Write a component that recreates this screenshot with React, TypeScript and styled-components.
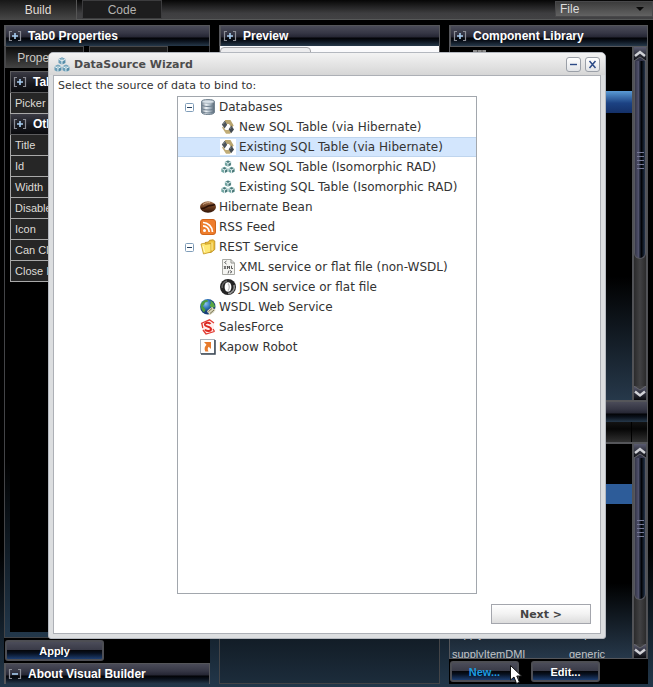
import React, { useState } from "react";
import styled, { createGlobalStyle, css } from "styled-components";

const ui = '"Liberation Sans", Arial, sans-serif';
const dialogFont = '"DejaVu Sans", Verdana, sans-serif';

const GlobalStyle = createGlobalStyle`
  * { box-sizing: border-box; }
  body { margin: 0; background: #000; font-family: ${ui}; font-size: 11px; color: #ddd; }
  button, select { font: inherit; color: inherit; margin: 0; padding: 0; }
  svg { display: block; flex: none; }
`;

const Page = styled.div`
  display: flex;
  flex-direction: column;
  height: 100vh;
  overflow: hidden;
  background: linear-gradient(#000 0, #000 80%, #22374a 100%);
`;

/* ---------- top bar ---------- */
const TopBar = styled.header`
  display: flex;
  flex: none;
  height: 20px;
  background: linear-gradient(#060606, #3e3e40 70%, #424244);
  border-bottom: 1px solid #565858;
`;
const TabStrip = styled.nav`
  display: flex;
  flex: 1;
  gap: 5px;
`;
const PageTab = styled.button<{ $active?: boolean }>`
  width: ${(p) => (p.$active ? 77 : 80)}px;
  height: ${(p) => (p.$active ? 20 : 19)}px;
  border: 1px solid ${(p) => (p.$active ? "#555" : "#3c3c3e")};
  border-width: ${(p) => (p.$active ? "0 1px 0 0" : "1px")};
  background: ${(p) => (p.$active ? "linear-gradient(#171717, #484848)" : "#1d1d1e")};
  color: ${(p) => (p.$active ? "#e0dcd6" : "#b4b2ae")};
  font-size: 12px;
  line-height: 18px;
`;
const FileMenu = styled.div`
  display: grid;
  align-items: center;
  width: 98px;
  height: 16px;
  margin-top: 1px;
  > * { grid-area: 1 / 1; }
  > svg { justify-self: end; margin-right: 9px; pointer-events: none; }
`;
const FileSelect = styled.select`
  appearance: none;
  height: 16px;
  padding-left: 4px;
  border: 1px solid #48484a;
  border-radius: 0;
  background: linear-gradient(#3c3c3c, #626262);
  font-size: 12px;
  line-height: 12px;
`;

/* ---------- columns and panels ---------- */
const Columns = styled.main`
  display: grid;
  grid-template-columns: 206fr 221fr 199fr;
  gap: 9px;
  flex: 1;
  min-height: 0;
  padding: 5px 5px 3px 4px;
`;
const Column = styled.section`
  display: flex;
  flex-direction: column;
  min-width: 0;
  min-height: 0;
`;
const Bar = styled.div`
  display: flex;
  align-items: center;
  flex: none;
  gap: 6px;
  height: 21px;
  padding-left: 2px;
  border: 1px solid #55565a;
  border-width: 1px 1px 0 2px;
  background: linear-gradient(#4a4b58 0, #363745 35%, #252633 55%, #020306 60%, #0a111b 75%, #26384a 100%);
`;
const BarTitle = styled.h2`
  margin: 0;
  color: #fff;
  font-size: 12px;
  font-weight: bold;
  white-space: nowrap;
`;
const PropertyPanel = styled.div`
  display: flex;
  flex-direction: column;
  flex: 1;
  min-height: 0;
  padding: 0 5px 5px;
  border: 1px solid #434447;
  border-top: 0;
  background: linear-gradient(#000 70%, #22374a);
`;
const PropertyTabs = styled.div`
  display: flex;
  gap: 5px;
  height: 25px;
  margin-left: -5px;
`;
const PropertyTab = styled.button<{ $active?: boolean }>`
  width: 79px;
  height: 22px;
  border: 1px solid #48484a;
  border-bottom: 0;
  background: ${(p) => (p.$active ? "linear-gradient(#0c0c0c, #444)" : "#1c1c1c")};
  color: #c9c7c2;
  font-size: 12px;
  line-height: 18px;
`;
const PropertyBody = styled.div`
  flex: 1;
  min-height: 0;
  background: #000;
`;
const PropertyTable = styled.table`
  width: 100%;
  border-collapse: collapse;
  th, td {
    height: 21px;
    padding: 0 4px;
    border: 1px solid #a9a9a9;
    background: #262626;
    color: #dedbd6;
    font-weight: normal;
    text-align: left;
    white-space: nowrap;
  }
  th { width: 100px; }
  .section { padding: 0; height: 21px; border-color: #5c5c5e; }
`;
const SectionBar = styled(Bar)`
  height: 20px;
  border: 0;
  background: linear-gradient(#3b3b45, #16171d 60%, #0a0b0e);
`;
const ActionStrip = styled.div`
  display: flex;
  flex: none;
  gap: 12px;
  padding: 2px 1px;
  background: #000;
`;
const ActionButton = styled.button<{ $wide?: boolean; $hot?: boolean }>`
  width: ${(p) => (p.$wide ? 99 : 69)}px;
  height: 21px;
  border: 2px solid #4d4e54;
  border-radius: 3px;
  background: linear-gradient(#4b4c59 0, #3a3b48 45%, #04060b 50%, #07101f 65%, #1c3d70 100%);
  color: ${(p) => (p.$hot ? "#1d9ce0" : "#fff")};
  font-size: 11px;
  font-weight: bold;
  line-height: 16px;
`;
const NewSlot = styled.div`
  position: relative;
  > svg { position: absolute; left: 60px; top: 4px; z-index: 5; }
`;

/* ---------- preview ---------- */
const PreviewPane = styled.div`
  flex: 1;
  border: 1px solid #434447;
  border-top: 0;
  background: linear-gradient(#fafafc 20px, #000 20px, #000 80%, #1c2c3b);
`;
const PreviewTab = styled.div`
  width: 91px;
  height: 20px;
  border: 1px solid #a4a4a8;
  border-radius: 4px 4px 0 0;
  background: #ececee;
  margin-top: 1px;
`;

/* ---------- library lists ---------- */
const ListArea = styled.div<{ $grow: number }>`
  display: flex;
  flex: ${(p) => p.$grow} 1 0;
  min-height: 0;
  border: 1px solid #55565a;
  border-width: 1px 0 1px 1px;
`;
const ListBody = styled.div`
  flex: 1;
  min-width: 0;
  overflow: hidden;
  background: linear-gradient(#000 65%, #26384a);
`;
const LibraryRow = styled.div<{ $selected?: boolean }>`
  height: 22px;
  padding: 3px 23px;
  ${(p) => p.$selected && css`background: linear-gradient(#5b9bd5, #1c4283 55%, #143068);`}
`;
const GridHead = styled.div`
  display: flex;
  flex: none;
  height: 21px;
  gap: 1px;
  border-bottom: 1px solid #55565a;
  background: #000;
  &::before, &::after {
    content: "";
    flex: 1;
    background: linear-gradient(#131313, #060606 35%, #303030);
  }
  &::after { flex: 0 0 15px; border-right: 1px solid #444; }
`;
const SourceTable = styled.table`
  width: 100%;
  border-collapse: collapse;
  table-layout: fixed;
  td { height: 20px; padding: 0 2px; color: #c2c4c6; line-height: 16px; white-space: nowrap; }
  td:first-child { width: 117px; }
  tr.selected td { background: #2d5c99; }
`;
const Track = styled.div`
  display: flex;
  flex-direction: column;
  flex: none;
  width: 16px;
  border: 1px solid #515256;
  border-width: 0 2px;
  background: linear-gradient(90deg, #2b2b2c, #414143 50%, #2b2b2c);
`;
const Thumb = styled.div<{ $grow: number }>`
  display: flex;
  align-items: center;
  justify-content: center;
  flex: ${(p) => p.$grow} 1 0;
  border: 1px solid #56575f;
  border-top: 0;
  border-radius: 0 0 6px 6px;
  background: linear-gradient(90deg, #343548 0, #50516c 35%, #1b2130 50%, #020306 65%, #23334a 100%);
`;
const Rest = styled.div<{ $grow: number }>`
  flex: ${(p) => p.$grow} 1 0;
`;

/* ---------- dialog ---------- */
const Overlay = styled.div`
  position: fixed;
  inset: 0;
  display: flex;
  padding: 52px 47px 48px 48px;
  pointer-events: none;
`;
const Dialog = styled.section`
  display: flex;
  flex-direction: column;
  flex: 1;
  padding: 0 4px 4px;
  border: 1px solid #b4b8bf;
  border-radius: 5px 5px 3px 3px;
  background: #dcdee0;
  color: #333;
  font-family: ${dialogFont};
  pointer-events: auto;
`;
const DialogHead = styled.header`
  display: flex;
  align-items: center;
  flex: none;
  gap: 4px;
  height: 22px;
  margin: 0 -4px;
  padding: 1px 5px 0;
  border-radius: 4px 4px 0 0;
  background: linear-gradient(#f3f3f3, #d6d6d6);
`;
const DialogTitle = styled.h1`
  flex: 1;
  margin: 0;
  color: #4c4c4c;
  font-size: 11px;
`;
const HeadButton = styled.button`
  display: grid;
  place-items: center;
  width: 15px;
  height: 15px;
  border: 1px solid #9ba0a8;
  border-radius: 3px;
  background: linear-gradient(#fff, #e2e4e7);
`;
const DialogBody = styled.div`
  display: flex;
  flex-direction: column;
  flex: 1;
  min-height: 0;
  padding: 0 4px 9px;
  border: 1px solid #adb0b6;
  background: #fff;
`;
const Prompt = styled.p`
  flex: none;
  margin: 0;
  font-size: 11px;
  line-height: 20px;
`;
const Tree = styled.ul`
  flex: 1;
  width: 300px;
  min-height: 0;
  margin: 0 auto 10px;
  padding: 0;
  overflow: hidden;
  list-style: none;
  border: 1px solid #a2a7ad;
`;
const TreeRow = styled.li<{ $depth: number; $selected?: boolean }>`
  display: flex;
  align-items: center;
  gap: 3px;
  height: 20px;
  padding-left: ${(p) => (p.$depth ? 42 : 7)}px;
  border: 1px solid transparent;
  border-width: 1px 0;
  font-size: 12px;
  white-space: nowrap;
  cursor: default;
  ${(p) => p.$selected && css`background: #d3e6fd; border-color: #bfd5ee;`}
`;
const Expander = styled.button`
  width: 9px;
  height: 9px;
  margin-right: 3px;
  border: 0;
  background: none;
`;
const ExpanderGap = styled.span`
  width: 9px;
  margin-right: 3px;
`;
const NextButton = styled.button`
  align-self: flex-end;
  flex: none;
  width: 100px;
  height: 20px;
  margin-right: 5px;
  border: 1px solid #a4a6ad;
  background: linear-gradient(#fff, #f2f2f2 50%, #dcdcdc);
  color: #444;
  font-size: 11px;
  font-weight: bold;
`;

/* ---------- drawings ---------- */
const Bracket = ({ minus }: { minus?: boolean }) => (
  <svg width="14" height="13" viewBox="0 0 14 13" fill="none">
    <path d="M4 1.500H1.500V10.500H4M10 1.500h2.500v9H10" stroke="#8b8d96" strokeWidth="1.200" />
    <path d={minus ? "M4 6h6" : "M4 6h6M7 3v6"} stroke="#a8cdf0" strokeWidth="1.600" />
  </svg>
);

const Cluster = ({ small }: { small?: boolean }) => (
  <svg width="16" height="16" viewBox={small ? "-1 -1 18 18" : "0 0 16 16"}>
    {[[8, 4], [4, 11.3], [12, 11.3]].map(([x, y]) => (
      <g key={x} transform={`translate(${x} ${y})`}>
        <path d="M0-3.7L3.5-2V2L0 3.8L-3.5 2V-2Z" fill={small ? "#6fa3a0" : "#6b9db7"} />
        <path d="M-3.5-1.8L0-.1L3.5-1.8M0 0V3.8" stroke="#eef5f6" strokeWidth="1" fill="none" />
        <path d="M0-2.8L2-1.8L0-.9L-2-1.8Z" fill={small ? "#4b7476" : "#a5c7d2"} />
        <path d="M.6.8L3-.5V1.8L.6 3Z" fill={small ? "#3c6264" : "#4c86a0"} opacity=".75" />
      </g>
    ))}
  </svg>
);

const Hibernate = () => (
  <svg width="16" height="16" viewBox="0 0 16 16">
    <rect width="16" height="16" fill="#fff" />
    <path d="M5 1h5.5l3.2 5.5-2 2.4L9 5H6.8L5 3.4Z" fill="#b9a56f" />
    <path d="M3 7.5L5.6 11H9l2.2 1.5-1 2.2H6L2 8.6Z" fill="#c1ad78" />
    <path d="M4.7 1.8L7.2 5.8L4.6 9.5L1.8 5.5Z" fill="#4d5358" />
    <path d="M11.4 6.4L14 10.5L11.2 14.3L8.6 10.2Z" fill="#454b51" />
    <path d="M4.7 3L3 5.5M11.3 7.7L10 10" stroke="#7e858b" />
  </svg>
);

const Database = () => (
  <svg width="16" height="16" viewBox="0 0 16 16">
    <defs>
      <linearGradient id="steel">
        <stop offset="0" stopColor="#6e7c89" /><stop offset=".35" stopColor="#f1f5f8" />
        <stop offset=".65" stopColor="#a9b8c4" /><stop offset="1" stopColor="#536270" />
      </linearGradient>
    </defs>
    <path d="M1.500 2.500C1.500-.2 14.500-.2 14.500 2.500V13C14.500 16.500 1.500 16.500 1.500 13Z" fill="url(#steel)" stroke="#758592" />
    <path d="M1.500 5.800C3 8 13 8 14.500 5.800M1.500 9.300C3 11.500 13 11.500 14.500 9.300M1.500 12.300C3 14.500 13 14.500 14.500 12.300" fill="none" stroke="#6d7e8d" />
    <ellipse cx="8" cy="2.700" rx="6" ry="1.700" fill="#d8e1e8" stroke="#8e9ca8" strokeWidth=".6" />
  </svg>
);

const Bean = () => (
  <svg width="16" height="16" viewBox="0 0 16 16">
    <defs>
      <linearGradient id="bean" x2="0" y2="1"><stop stopColor="#a27450" /><stop offset=".5" stopColor="#6a3b1d" /><stop offset="1" stopColor="#2d1408" /></linearGradient>
    </defs>
    <ellipse cx="8" cy="8" rx="8" ry="5.800" fill="url(#bean)" />
    <path d="M1 9.500C5 10 6 7.500 9 6.800C11.500 6.200 13 6.500 15 5.500" fill="none" stroke="#2a1005" strokeWidth="1.600" />
    <path d="M3 5.500C5 3.700 8 3.300 10 3.700" stroke="#d2ab88" fill="none" />
  </svg>
);

const Rss = () => (
  <svg width="16" height="16" viewBox="0 0 16 16">
    <rect x=".5" y=".5" width="15" height="15" rx="2.500" fill="#ee7d2c" stroke="#d0651c" />
    <circle cx="4.500" cy="11.500" r="1.500" fill="#fff" />
    <path d="M3 6.800A6.200 6.200 0 0 1 9.200 13M3 3.500A9.500 9.500 0 0 1 12.500 13" fill="none" stroke="#fff" strokeWidth="1.700" />
  </svg>
);

const Folder = () => (
  <svg width="16" height="16" viewBox="0 0 16 16">
    <path d="M5 3.500L8.500 3L9.500 1.300L13 .8L14.800 2V10.500L11 13.500L5 13Z" fill="#eec23b" stroke="#b58718" strokeWidth=".8" />
    <path d="M1 5L4 4.300L5.500 5.300L11 4.500V13L3.500 15Z" fill="#ffe873" stroke="#c49620" strokeWidth=".8" />
    <path d="M12 3.500V11.500" stroke="#fff3a8" />
    <path d="M3 7L4.500 13" stroke="#fffad0" />
  </svg>
);

const XmlFile = () => (
  <svg width="16" height="16" viewBox="0 0 16 16" fill="none">
    <path d="M2.500.5H11L14.500 4V15.500H2.500Z" fill="#f5f5f2" stroke="#a9aaa5" />
    <path d="M11 .5V4h3.500" stroke="#8f908c" />
    <path d="M6.500 2L4.500 3.500L6.500 5M10 11.500l2 1.300-2 1.300M9 11.500l-1 3" stroke="#666" />
    <path d="M4 7l2 3M6 7l-2 3M7.500 10V7l1 1.500L9.500 7v3M11.500 6.800V9.500H13" stroke="#4b4b4b" strokeWidth=".9" />
  </svg>
);

const Json = () => (
  <svg width="16" height="16" viewBox="0 0 16 16" fill="none">
    <circle cx="8" cy="8" r="8" fill="#242424" />
    <path d="M8 14.500A6.500 6.500 0 0 0 14 6" stroke="#8f8f8f" strokeWidth="1.600" />
    <path d="M2.200 9A6 6 0 0 1 7 2" stroke="#666" strokeWidth="1.300" />
    <ellipse cx="8" cy="8" rx="3.400" ry="4.800" fill="#fff" />
    <path d="M8 4.500C9.500 6.500 9.500 9.500 8 11.500" stroke="#bcbcbc" strokeWidth="1.300" />
  </svg>
);

const Globe = () => (
  <svg width="16" height="16" viewBox="0 0 16 16">
    <defs><radialGradient id="sea" cx=".35" cy=".3"><stop stopColor="#8fc4f2" /><stop offset=".6" stopColor="#2f74b8" /><stop offset="1" stopColor="#173f78" /></radialGradient></defs>
    <circle cx="7.800" cy="7.800" r="7.700" fill="url(#sea)" />
    <path d="M1 5C2 2 5 .5 7.500 1L8 2.500L5 3.500L4 6L2.500 7L4.500 9L5.500 11L4 13.500C1.500 11.500.5 8 1 5Z" fill="#4c9c3f" />
    <path d="M10 1.500C13.500 3 15 5.500 15 8L12 9L9.500 6.500L11 4Z" fill="#5aa744" />
    <path d="M8.500 12.500l3.500-3M10 14.500l4-3.500" stroke="#ddd9bb" strokeWidth="2.600" strokeLinecap="round" />
    <path d="M8.500 12.500l3.500-3M10 14.500l4-3.500" stroke="#77725a" strokeWidth="1" />
  </svg>
);

const Salesforce = () => (
  <svg width="16" height="16" viewBox="0 0 16 16" fill="none">
    <path d="M1.500 4L10 1L14.500 4.500L13 13L6 15L2 11Z" fill="#fff0ee" />
    <path d="M10.500 5C9 2.800 4.500 3.700 5 6C5.500 8 11 7.300 11 10C11 12.500 6.500 12.800 5 10.500" stroke="#dc2720" strokeWidth="2" />
    <path d="M1 4.500L9.500.8L14 4M1.800 4.500L2.800 9M3 11L6 15L14.500 12.500M13 10l1.500 2.500" stroke="#e23b33" strokeWidth="1.300" />
  </svg>
);

const Kapow = () => (
  <svg width="16" height="16" viewBox="0 0 16 16">
    <rect x=".5" y=".5" width="14" height="14" fill="#fff" stroke="#a9b1ba" />
    <path d="M15 1V15H1" fill="none" stroke="#3c4854" strokeWidth="1.500" />
    <path d="M4 3H11V10L8.700 7.800C7.500 9 7.400 10.500 8.500 12.500H5.300C4 9.500 4.600 7.500 6.500 5.700Z" fill="#e77b2d" />
  </svg>
);

const Chevron = ({ down }: { down?: boolean }) => (
  <svg width="12" height="14" viewBox="0 0 12 14">
    <defs><linearGradient id="cap" x2="0" y2="1"><stop stopColor="#5a5b70" /><stop offset="1" stopColor="#08090d" /></linearGradient></defs>
    <rect width="12" height="14" fill="url(#cap)" />
    <path d={down ? "M1 5.500L6 9.500L11 5.500" : "M1 9L6 5L11 9"} stroke="#d0d1d6" strokeWidth="2.500" fill="none" />
    <path d={down ? "M0 0L6 4L12 0" : "M0 14L6 10L12 14"} fill={down ? "#414143" : "#34354a"} stroke="#66676c" />
  </svg>
);

const Cursor = () => (
  <svg width="13" height="20" viewBox="0 0 13 20">
    <path d="M.5.5V15L4 12L6.500 18.500L9.500 17.300L6.800 11H11.500Z" fill="#fff" stroke="#111" />
  </svg>
);

const ScrollBar = ({ thumb, rest }: { thumb: number; rest: number }) => (
  <Track>
    <Chevron />
    <Thumb $grow={thumb}>
      <svg width="7" height="18" viewBox="0 0 7 18"><path d="M0 1.500h7M0 5.500h7M0 9.500h7M0 13.500h7M0 17.500h7" stroke="#777a98" /></svg>
    </Thumb>
    <Rest $grow={rest} />
    <Chevron down />
  </Track>
);

/* ---------- data ---------- */
type Node = { label: string; icon: React.ReactNode; children?: Node[] };
const sources: Node[] = [
  {
    label: "Databases",
    icon: <Database />,
    children: [
      { label: "New SQL Table (via Hibernate)", icon: <Hibernate /> },
      { label: "Existing SQL Table (via Hibernate)", icon: <Hibernate /> },
      { label: "New SQL Table (Isomorphic RAD)", icon: <Cluster small /> },
      { label: "Existing SQL Table (Isomorphic RAD)", icon: <Cluster small /> },
    ],
  },
  { label: "Hibernate Bean", icon: <Bean /> },
  { label: "RSS Feed", icon: <Rss /> },
  {
    label: "REST Service",
    icon: <Folder />,
    children: [
      { label: "XML service or flat file (non-WSDL)", icon: <XmlFile /> },
      { label: "JSON service or flat file", icon: <Json /> },
    ],
  },
  { label: "WSDL Web Service", icon: <Globe /> },
  { label: "SalesForce", icon: <Salesforce /> },
  { label: "Kapow Robot", icon: <Kapow /> },
];
const otherProperties = ["Title", "Id", "Width", "Disabled", "Icon", "Can Close", "Close Icon"];
const sourceRows = [
  ["", ""], ["", ""], ["", ""], ["", ""], ["", ""], ["", ""], ["", ""], ["", ""], ["", ""],
  ["supplyItem", "\u00a0\u00a0sql"],
  ["supplyItemDMI", "generic"],
];

export default function App() {
  const [selected, setSelected] = useState("Existing SQL Table (via Hibernate)");
  const [closed, setClosed] = useState<string[]>([]);
  const toggle = (name: string) =>
    setClosed((c) => (c.includes(name) ? c.filter((n) => n !== name) : [...c, name]));

  const renderNode = (node: Node, depth: number): React.ReactNode => (
    <React.Fragment key={node.label}>
      <TreeRow
        role="treeitem"
        aria-level={depth + 1}
        aria-selected={selected === node.label}
        aria-expanded={node.children ? !closed.includes(node.label) : undefined}
        $depth={depth}
        $selected={selected === node.label}
        onClick={() => setSelected(node.label)}
      >
        {depth === 0 && (node.children ? (
          <Expander aria-label={`Toggle ${node.label}`} onClick={(e) => { e.stopPropagation(); toggle(node.label); }}>
            <svg width="9" height="9" viewBox="0 0 9 9">
              <rect x=".5" y=".5" width="8" height="8" rx="1" fill="#fff" stroke="#7f9db9" />
              <path d={closed.includes(node.label) ? "M2 4.500h5M4.500 2v5" : "M2 4.500h5"} stroke="#27415f" />
            </svg>
          </Expander>
        ) : <ExpanderGap />)}
        {node.icon}
        <span>{node.label}</span>
      </TreeRow>
      {!closed.includes(node.label) && node.children?.map((c) => renderNode(c, depth + 1))}
    </React.Fragment>
  );

  return (
    <>
      <GlobalStyle />
      <Page>
        <TopBar>
          <TabStrip>
            <PageTab $active>Build</PageTab>
            <PageTab>Code</PageTab>
          </TabStrip>
          <FileMenu>
            <FileSelect aria-label="File menu"><option>File</option></FileSelect>
            <svg width="8" height="4" viewBox="0 0 8 4"><path d="M0 0h8L4 4Z" fill="#0a0a0a" /></svg>
          </FileMenu>
        </TopBar>

        <Columns>
          <Column>
            <Bar><Bracket /><BarTitle>Tab0 Properties</BarTitle></Bar>
            <PropertyPanel>
              <PropertyTabs>
                <PropertyTab $active>Properties</PropertyTab>
                <PropertyTab>Events</PropertyTab>
              </PropertyTabs>
              <PropertyBody>
                <PropertyTable>
                  <tbody>
                    <tr><td className="section" colSpan={2}><SectionBar><Bracket /><BarTitle>Tab</BarTitle></SectionBar></td></tr>
                    <tr><th scope="row">Picker Title</th><td /></tr>
                    <tr><td className="section" colSpan={2}><SectionBar><Bracket /><BarTitle>Other</BarTitle></SectionBar></td></tr>
                    {otherProperties.map((p) => <tr key={p}><th scope="row">{p}</th><td /></tr>)}
                  </tbody>
                </PropertyTable>
              </PropertyBody>
            </PropertyPanel>
            <ActionStrip><ActionButton $wide>Apply</ActionButton></ActionStrip>
            <Bar><Bracket minus /><BarTitle>About Visual Builder</BarTitle></Bar>
          </Column>

          <Column>
            <Bar><Bracket /><BarTitle>Preview</BarTitle></Bar>
            <PreviewPane><PreviewTab /></PreviewPane>
          </Column>

          <Column>
            <Bar><Bracket /><BarTitle>Component Library</BarTitle></Bar>
            <ListArea $grow={355}>
              <ListBody>
                <LibraryRow>
                  <svg width="13" height="13" viewBox="0 0 13 13"><rect width="13" height="13" fill="#8b8b8b" /><path d="M4.500 0v13M9 0v13" stroke="#555" /></svg>
                </LibraryRow>
                <LibraryRow />
                <LibraryRow $selected />
              </ListBody>
              <ScrollBar thumb={199} rest={127} />
            </ListArea>
            <Bar />
            <GridHead />
            <ListArea $grow={216}>
              <ListBody>
                <SourceTable>
                  <tbody>
                    {sourceRows.map(([name, type], i) => (
                      <tr key={i} className={i === 2 ? "selected" : undefined}><td>{name}</td><td>{type}</td></tr>
                    ))}
                  </tbody>
                </SourceTable>
              </ListBody>
              <ScrollBar thumb={143} rest={44} />
            </ListArea>
            <ActionStrip>
              <NewSlot><ActionButton $hot>New...</ActionButton><Cursor /></NewSlot>
              <ActionButton>Edit...</ActionButton>
            </ActionStrip>
          </Column>
        </Columns>
      </Page>

      <Overlay>
        <Dialog role="dialog" aria-labelledby="wizard-title">
          <DialogHead>
            <Cluster />
            <DialogTitle id="wizard-title">DataSource Wizard</DialogTitle>
            <HeadButton aria-label="Minimize">
              <svg width="9" height="9" viewBox="0 0 9 9"><path d="M1 4.500h7" stroke="#2d4b87" strokeWidth="1.400" /></svg>
            </HeadButton>
            <HeadButton aria-label="Close">
              <svg width="9" height="9" viewBox="0 0 9 9"><path d="M1.500 1l6 7M7.500 1l-6 7" stroke="#2d4b87" strokeWidth="1.500" /></svg>
            </HeadButton>
          </DialogHead>
          <DialogBody>
            <Prompt>Select the source of data to bind to:</Prompt>
            <Tree role="tree" aria-label="Data sources">{sources.map((n) => renderNode(n, 0))}</Tree>
            <NextButton>Next &gt;</NextButton>
          </DialogBody>
        </Dialog>
      </Overlay>
    </>
  );
}
